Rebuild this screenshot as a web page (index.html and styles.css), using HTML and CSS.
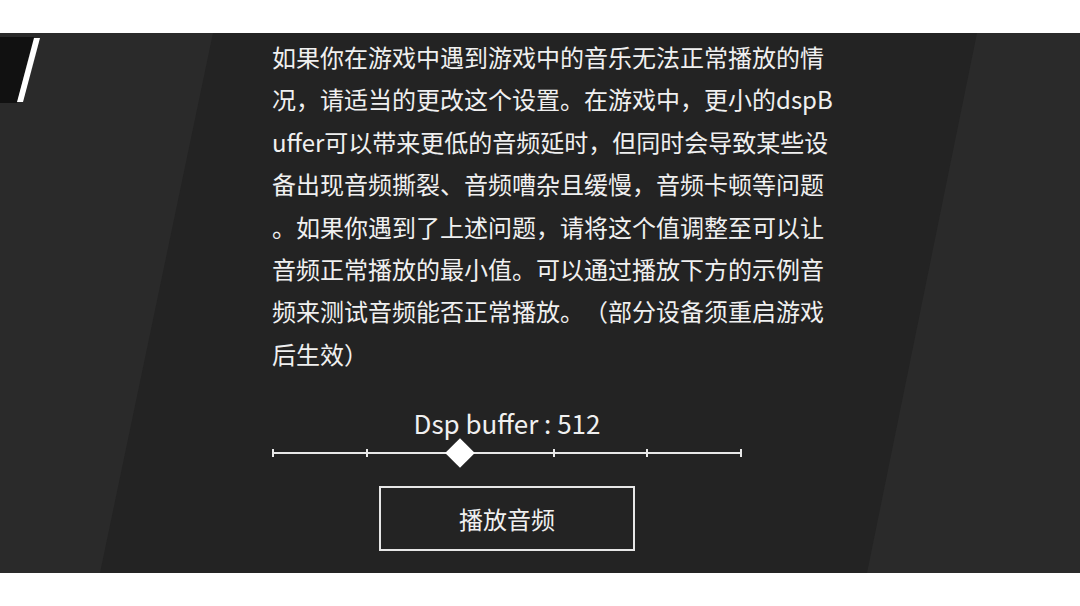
FILE: index.html
```html
<!DOCTYPE html>
<html lang="zh-CN">
  <head>
    <meta charset="UTF-8" />
    <meta name="viewport" content="width=device-width, initial-scale=1.0" />
    <title>Dsp buffer</title>
    <link rel="stylesheet" href="styles.css">
  </head>
  <body>
    <div class="stage">
      <a class="back" href="#">
        <svg width="42" height="66" viewBox="0 0 42 66">
          <polygon points="0,0 34,0 17,66 0,66" fill="#111111" />
          <polygon points="34,1 40,1 23,65 17,65" fill="#ffffff" />
        </svg>
      </a>

      <div class="content">
        <p class="desc">
          如果你在游戏中遇到游戏中的音乐无法正常播放的情<br>
          况，请适当的更改这个设置。在游戏中，更小的dspB<br>
          uffer可以带来更低的音频延时，但同时会导致某些设<br>
          备出现音频撕裂、音频嘈杂且缓慢，音频卡顿等问题<br>
          。如果你遇到了上述问题，请将这个值调整至可以让<br>
          音频正常播放的最小值。可以通过播放下方的示例音<br>
          频来测试音频能否正常播放。（部分设备须重启游戏<br>
          后生效）
        </p>

        <div class="control">
          <div class="label">Dsp buffer : 512</div>
          <div class="slider">
            <span class="tick"></span>
            <span class="tick"></span>
            <span class="tick"></span>
            <span class="tick"></span>
            <span class="tick"></span>
            <span class="tick"></span>
            <span class="thumb" style="left: 40%"></span>
          </div>
          <button class="play">播放音频</button>
        </div>
      </div>
    </div>
  </body>
</html>
```

FILE: styles.css
```css
body {
  margin: 0;
  background: #ffffff;
  font-family: "Noto Sans CJK SC", "Noto Sans", sans-serif;
}

.stage {
  position: relative;
  margin-top: 33px;
  height: 540px;
  background: #232323;
  overflow: hidden;
}

/* slanted side panels */
.stage::before,
.stage::after {
  content: "";
  position: absolute;
  top: 0;
  bottom: 0;
  left: 0;
  right: 0;
  background: #2a2a2a;
}
.stage::before {
  clip-path: polygon(0 0, 213px 0, 100px 100%, 0 100%);
}
.stage::after {
  clip-path: polygon(977px 0, 100% 0, 100% 100%, 867px 100%);
}

.back {
  position: absolute;
  top: 4px;
  left: 0;
  z-index: 2;
  display: block;
  line-height: 0;
}

.content {
  position: relative;
  z-index: 1;
  display: flex;
  flex-direction: column;
  padding: 3px 0 0 272px;
}

.desc {
  margin: 0;
  width: 580px;
  color: #f0f0f0;
  font-size: 24px;
  line-height: 42.4px;
  white-space: nowrap;
  text-spacing-trim: space-all;
}

.control {
  width: 470px;
  display: flex;
  flex-direction: column;
  align-items: center;
}

.label {
  margin-top: 33px;
  color: #f0f0f0;
  font-size: 26px;
  line-height: 30px;
}

.slider {
  position: relative;
  align-self: stretch;
  height: 20px;
  margin-top: 5px;
  display: flex;
  justify-content: space-between;
  align-items: center;
}
.slider::before {
  content: "";
  position: absolute;
  left: 0;
  right: 0;
  top: 9px;
  height: 2px;
  background: #e8e8e8;
}
.tick {
  width: 2px;
  height: 8px;
  background: #e8e8e8;
}
.thumb {
  position: absolute;
  top: 10px;
  width: 21px;
  height: 21px;
  background: #ffffff;
  transform: translate(-50%, -50%) rotate(45deg);
}

.play {
  margin-top: 23px;
  width: 256px;
  height: 65px;
  border: 2px solid #e6e6e6;
  background: transparent;
  color: #f0f0f0;
  font-family: inherit;
  font-size: 24px;
  cursor: pointer;
}
```
